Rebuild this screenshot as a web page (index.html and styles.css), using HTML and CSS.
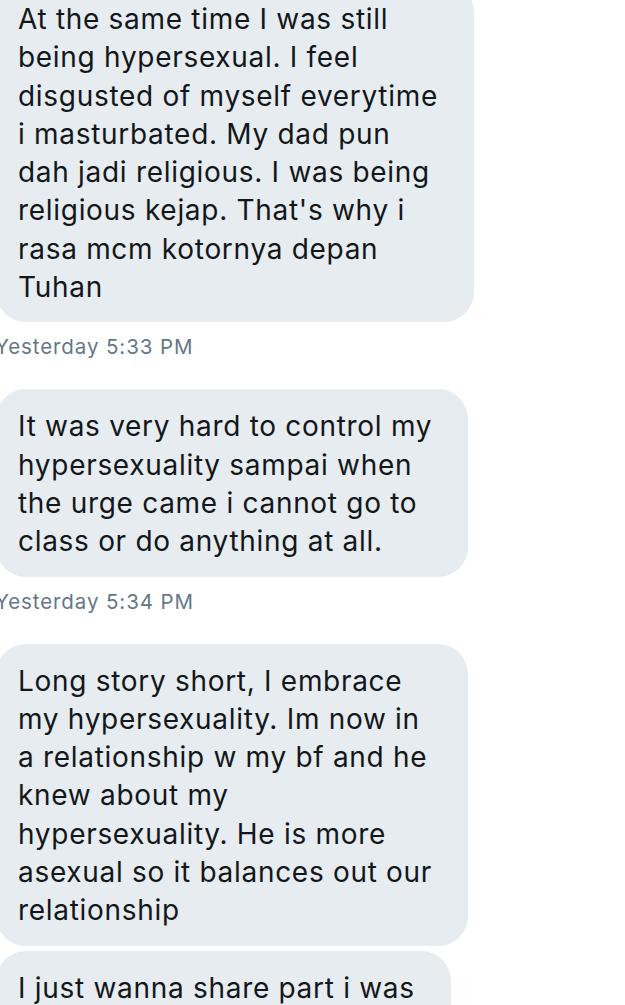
FILE: index.html
```html
<!DOCTYPE html>
<html lang="en">
<head>
  <meta charset="UTF-8">
  <meta name="viewport" content="width=device-width, initial-scale=1.0">
  <title>Messages</title>
  <link rel="stylesheet" href="styles.css">
</head>
<body>
  <div class="thread">
    <div class="bubble">At the same time I was still<br>being hypersexual. I feel<br>disgusted of myself everytime<br>i masturbated. My dad pun<br>dah jadi religious. I was being<br>religious kejap. That's why i<br>rasa mcm kotornya depan<br>Tuhan</div>
    <div class="stamp">Yesterday 5:33 PM</div>
    <div class="bubble">It was very hard to control my<br>hypersexuality sampai when<br>the urge came i cannot go to<br>class or do anything at all.</div>
    <div class="stamp">Yesterday 5:34 PM</div>
    <div class="bubble">Long story short, I embrace<br>my hypersexuality. Im now in<br>a relationship w my bf and he<br>knew about my<br>hypersexuality. He is more<br>asexual so it balances out our<br>relationship</div>
    <div class="bubble">I just wanna share part i was<br>dealing with it</div>
  </div>
</body>
</html>
```

FILE: styles.css
```css
body {
  margin: 0;
  padding: 0;
  background-color: #fff;
  font-family: Inter, "Liberation Sans", sans-serif;
  overflow: hidden;
  height: 1005px;
}
.thread {
  display: flex;
  flex-direction: column;
  align-items: flex-start;
  margin-top: -18px;
  margin-left: -4px;
}
.bubble {
  background-color: #e6ecf0;
  color: #14171a;
  font-size: 28px;
  letter-spacing: 0.7px;
  line-height: 38.3px;
  white-space: nowrap;
  padding: 18px 36px 16px 22px;
  border-radius: 30px;
  margin-bottom: 5px;
}
.stamp {
  color: #657786;
  font-size: 20.5px;
  letter-spacing: 0.9px;
  line-height: 24px;
  margin: 8px 0 30px -1px;
}
```
